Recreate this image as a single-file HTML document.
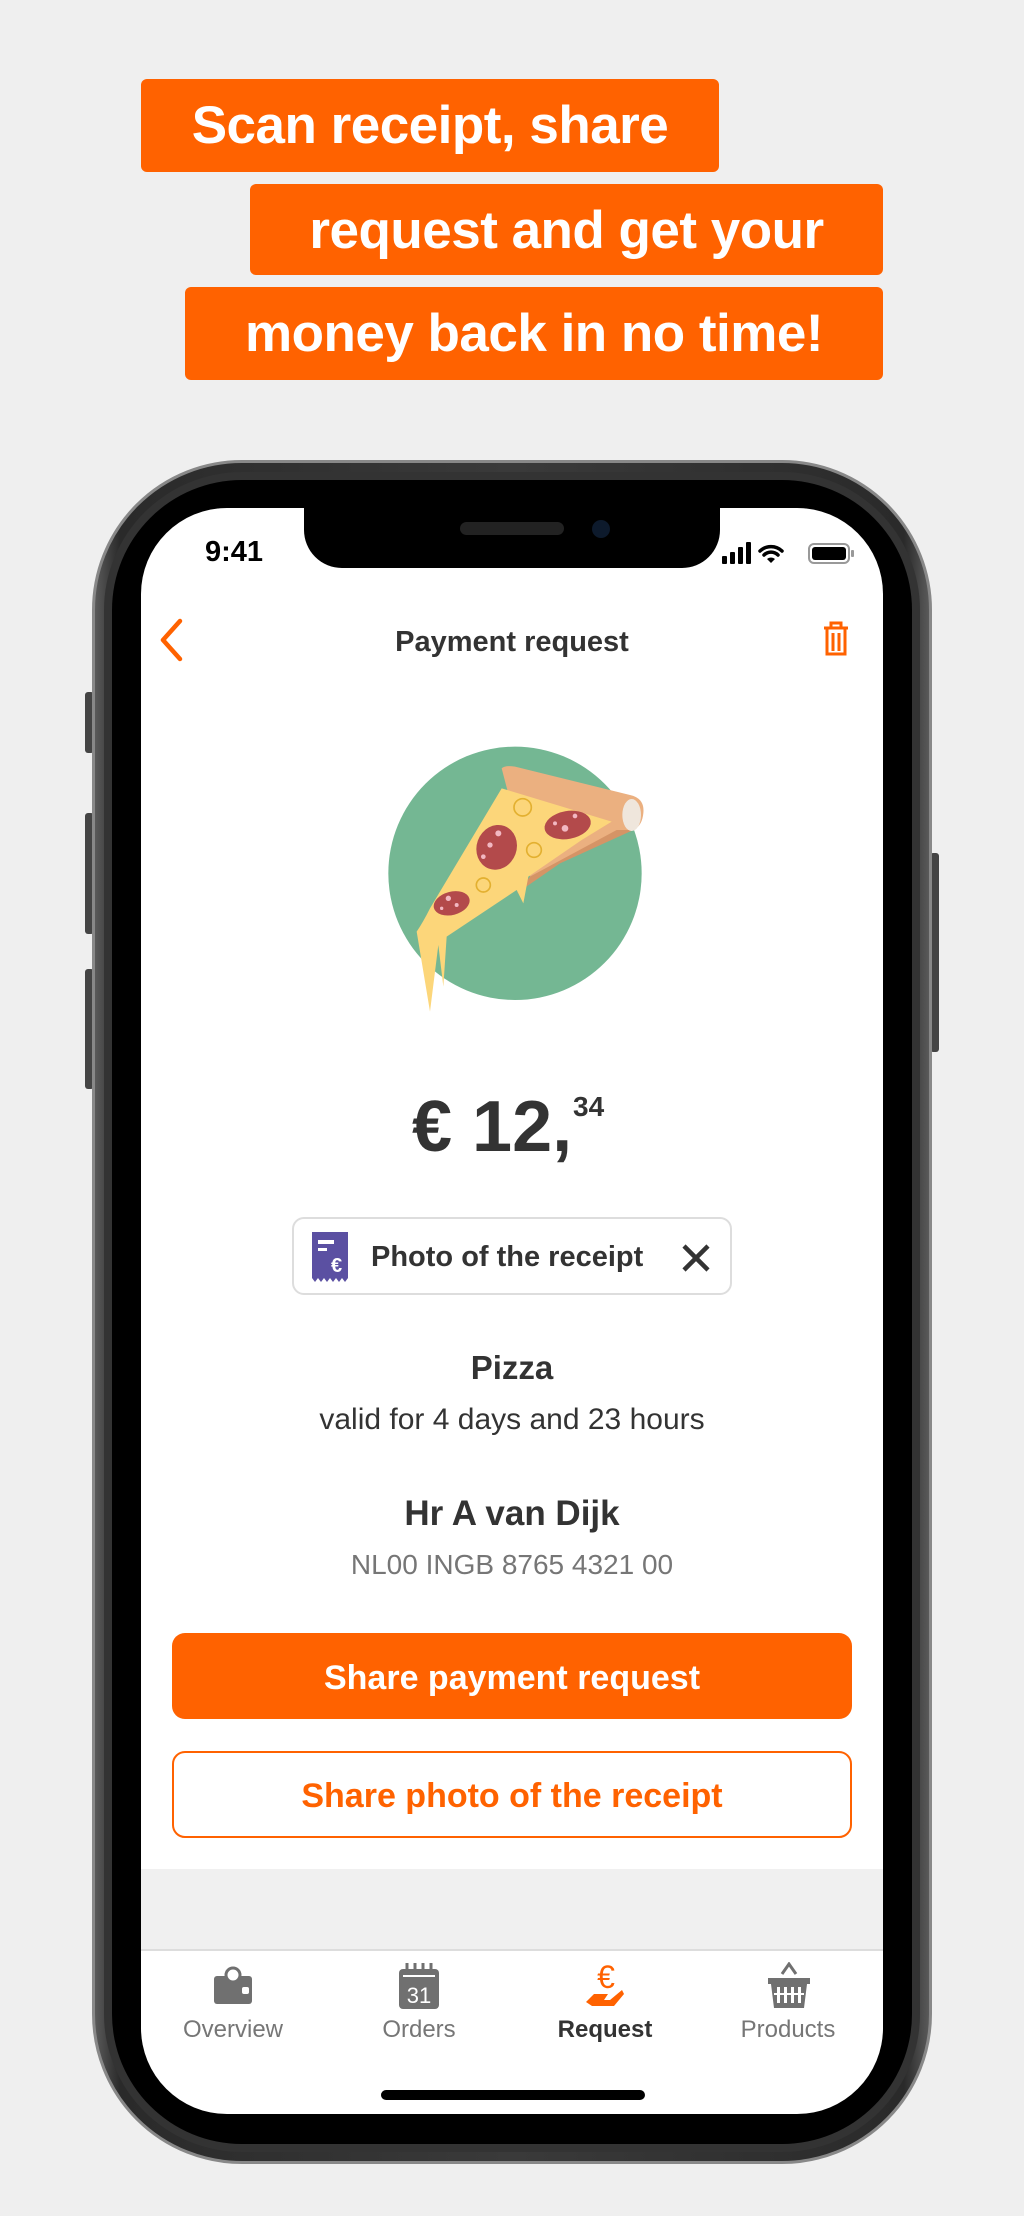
<!DOCTYPE html>
<html><head><meta charset="utf-8"><style>
*{margin:0;padding:0;box-sizing:border-box}
body{width:1024px;height:2216px;background:#efefef;position:relative;overflow:hidden;font-family:"Liberation Sans",sans-serif}
.hl{position:absolute;background:#ff6200;color:#fff;font-weight:bold;font-size:53px;line-height:93px;border-radius:6px;text-align:center;letter-spacing:-0.5px}
.abs{position:absolute}
.c{position:absolute;left:141px;width:742px;text-align:center;color:#333}
.tab{position:absolute;top:2016px;width:160px;text-align:center;font-size:24px;color:#767676}
</style></head><body>
<div class="hl" style="left:141px;top:79px;width:578px;height:93px">Scan receipt, share</div>
<div class="hl" style="left:250px;top:184px;width:633px;height:91px">request and get your</div>
<div class="hl" style="left:185px;top:287px;width:698px;height:93px">money back in no time!</div>

<div class="abs" style="left:85px;top:692px;width:9px;height:61px;background:#444;border-radius:3px"></div>
<div class="abs" style="left:85px;top:813px;width:9px;height:121px;background:#444;border-radius:3px"></div>
<div class="abs" style="left:85px;top:969px;width:9px;height:120px;background:#444;border-radius:3px"></div>
<div class="abs" style="left:930px;top:853px;width:9px;height:199px;background:#444;border-radius:3px"></div>
<div class="abs" style="left:92px;top:460px;width:840px;height:1704px;border-radius:150px;background:linear-gradient(90deg,#5a5a5a,#2a2a2a 3%,#3a3a3a 50%,#2a2a2a 97%,#5a5a5a);border:3px solid #888"></div>
<div class="abs" style="left:104px;top:472px;width:816px;height:1680px;border-radius:138px;background:#333"></div>
<div class="abs" style="left:112px;top:480px;width:800px;height:1664px;border-radius:130px;background:#000"></div>
<div class="abs" style="left:141px;top:508px;width:742px;height:1606px;border-radius:86px;background:#fff;overflow:hidden">
  <div class="abs" style="left:0;top:1361px;width:742px;height:82px;background:#f0f0f0;border-bottom:2px solid #ddd"></div>
</div>
<div class="abs" style="left:304px;top:500px;width:416px;height:68px;background:#000;border-radius:0 0 38px 38px"></div>
<div class="abs" style="left:460px;top:522px;width:104px;height:13px;background:#222;border-radius:7px"></div>
<div class="abs" style="left:592px;top:520px;width:18px;height:18px;background:#0d1a2c;border-radius:50%"></div>
<div class="abs" style="left:205px;top:536px;font-size:29px;font-weight:bold;color:#000">9:41</div>
<svg class="abs" style="left:720px;top:540px" width="140" height="28" viewBox="0 0 140 28">
<rect x="2" y="16" width="5" height="8" rx="1"/><rect x="10" y="12" width="5" height="12" rx="1"/><rect x="18" y="7" width="5" height="17" rx="1"/><rect x="26" y="2" width="5" height="22" rx="1"/>
<path d="M40 11a16 16 0 0 1 22 0M44 15a10 10 0 0 1 14 0" stroke="#000" stroke-width="3.5" fill="none" stroke-linecap="round"/><path d="M47 19l4 4 4-4a6 6 0 0 0-8 0z"/>
<rect x="89" y="4" width="40" height="19" rx="5" fill="none" stroke="#999" stroke-width="2"/><rect x="92" y="7" width="34" height="13" rx="3"/><rect x="131" y="10" width="3" height="7" rx="1" fill="#999"/>
</svg>
<svg class="abs" style="left:156px;top:617px" width="30" height="46"><path d="M24 4L7 23l17 19" stroke="#ff6200" stroke-width="4.5" fill="none" stroke-linecap="round" stroke-linejoin="round"/></svg>
<div class="c" style="top:624px;font-size:29px;font-weight:bold;line-height:36px">Payment request</div>
<svg class="abs" style="left:821px;top:620px" width="30" height="38" viewBox="0 0 30 38"><g stroke="#ff6200" stroke-width="3" fill="none"><path d="M10 7V3h10v4M3 8h24M6 9v25h18V9M12 13v18M18 13v18"/></g></svg>
<svg class="abs" style="left:380px;top:730px" width="280" height="290" viewBox="0 0 820 870">
<circle cx="395" cy="430" r="380" fill="#74b793"/>
<path d="M355 115q10-10 40-5l345 85q45 10 40 55q-5 50-50 55l-290 135z" fill="#ebb080"/>
<path d="M700 300l-260 140 -40 50 130-90 220-100z" fill="#d59466"/>
<path d="M355 175l330 100 -90 55 -160 110 -15 80 -20-40 -210 140 -10 150 -15-125 -25 200 -40-240 q20-30 40-70z" fill="#fcd67a"/>
<ellipse cx="745" cy="255" rx="28" ry="48" fill="#efe6dc"/>
<g fill="#b34a4b"><ellipse cx="340" cy="352" rx="60" ry="68" transform="rotate(20 340 352)"/><ellipse cx="553" cy="285" rx="70" ry="42" transform="rotate(-10 553 285)"/><ellipse cx="205" cy="520" rx="55" ry="35" transform="rotate(-15 205 520)"/></g>
<g fill="#f2b8c2"><circle cx="345" cy="310" r="9"/><circle cx="320" cy="345" r="8"/><circle cx="300" cy="380" r="7"/><circle cx="545" cy="295" r="10"/><circle cx="575" cy="258" r="7"/><circle cx="515" cy="280" r="6"/><circle cx="195" cy="505" r="8"/><circle cx="220" cy="525" r="6"/><circle cx="175" cy="535" r="5"/></g>
<g fill="none" stroke="#e3b030" stroke-width="5"><circle cx="418" cy="232" r="26"/><circle cx="452" cy="360" r="22"/><circle cx="300" cy="465" r="21"/></g>
</svg>
<div class="abs" style="left:412px;top:1082px;font-size:72px;font-weight:bold;color:#333;line-height:90px">€ 12,</div>
<div class="abs" style="left:573px;top:1091px;font-size:28px;font-weight:bold;color:#333">34</div>
<div class="abs" style="left:292px;top:1217px;width:440px;height:78px;border:2px solid #ddd;border-radius:12px"></div>
<svg class="abs" style="left:312px;top:1232px" width="36" height="50" viewBox="0 0 36 50"><path d="M0 0h36v46l-3 4-3-4-3 4-3-4-3 4-3-4-3 4-3-4-3 4-3-4-3 4-3-4z" fill="#5b50a2"/><rect x="6" y="8" width="16" height="4" fill="#fff"/><rect x="6" y="16" width="9" height="3" fill="#fff"/><text x="19" y="40" font-size="20" font-weight="bold" fill="#fff" font-family="Liberation Sans">€</text></svg>
<div class="abs" style="left:371px;top:1241px;font-size:29px;font-weight:bold;color:#333">Photo of the receipt</div>
<svg class="abs" style="left:680px;top:1242px" width="32" height="32"><path d="M4 4l24 24M28 4L4 28" stroke="#333" stroke-width="4.5"/></svg>
<div class="c" style="top:1349px;font-size:33px;font-weight:bold">Pizza</div>
<div class="c" style="top:1403px;font-size:30px">valid for 4 days and 23 hours</div>
<div class="c" style="top:1494px;font-size:35px;font-weight:bold">Hr A van Dijk</div>
<div class="c" style="top:1549px;font-size:28px;color:#767676">NL00 INGB 8765 4321 00</div>
<div class="abs" style="left:172px;top:1633px;width:680px;height:86px;background:#ff6200;border-radius:13px;color:#fff;font-size:34px;font-weight:bold;text-align:center;line-height:90px">Share payment request</div>
<div class="abs" style="left:172px;top:1751px;width:680px;height:87px;border:2px solid #ff6200;border-radius:13px;color:#ff6200;font-size:34px;font-weight:bold;text-align:center;line-height:87px">Share photo of the receipt</div>
<svg class="abs" style="left:212px;top:1966px" width="42" height="40" viewBox="0 0 42 40"><rect x="2" y="10" width="38" height="28" rx="3" fill="#707070"/><circle cx="21" cy="9" r="7" fill="#fff" stroke="#707070" stroke-width="3"/><rect x="30" y="21" width="7" height="7" rx="2" fill="#fff"/></svg>
<svg class="abs" style="left:399px;top:1963px" width="40" height="46" viewBox="0 0 40 46"><rect x="0" y="6" width="40" height="40" rx="4" fill="#707070"/><g stroke="#707070" stroke-width="3"><path d="M8 0v8M16 0v8M24 0v8M32 0v8"/></g><rect x="4" y="12" width="32" height="2" fill="#fff"/><text x="20" y="40" font-size="22" fill="#fff" text-anchor="middle" font-family="Liberation Sans">31</text></svg>
<svg class="abs" style="left:584px;top:1962px" width="44" height="48" viewBox="0 0 44 48"><text x="22" y="26" font-size="32" fill="#ff6200" text-anchor="middle" font-family="Liberation Sans">€</text><path d="M2 40l8-8h14l-4 6h6l12-10 2 4-10 12H8z" fill="#ff6200"/></svg>
<svg class="abs" style="left:768px;top:1962px" width="42" height="48" viewBox="0 0 42 48"><path d="M14 12l7-10 7 10" stroke="#707070" stroke-width="3" fill="none"/><path d="M0 16h42v6h-3l-3 24H6L3 22H0z" fill="#707070"/><g fill="#fff"><rect x="9" y="25" width="3" height="16"/><rect x="16" y="25" width="3" height="16"/><rect x="23" y="25" width="3" height="16"/><rect x="30" y="25" width="3" height="16"/><rect x="6" y="31" width="30" height="2"/></g></svg>
<div class="tab" style="left:153px">Overview</div>
<div class="tab" style="left:339px">Orders</div>
<div class="tab" style="left:525px;color:#333;font-weight:bold">Request</div>
<div class="tab" style="left:708px">Products</div>
<div class="abs" style="left:381px;top:2090px;width:264px;height:10px;background:#000;border-radius:5px"></div>
</body></html>
